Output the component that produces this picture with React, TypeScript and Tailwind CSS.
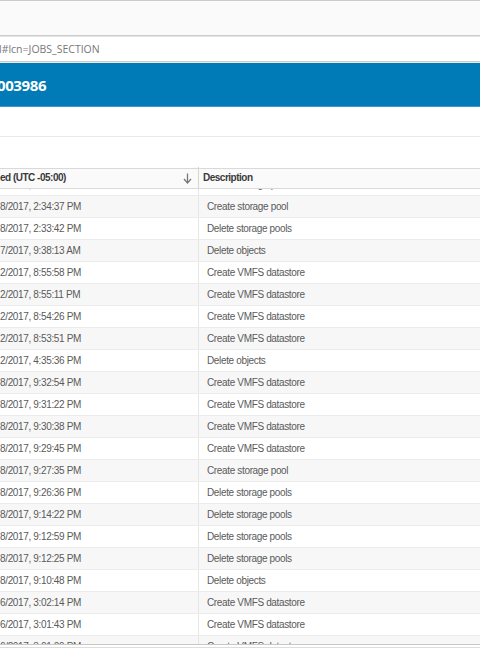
import React from "react";

const rows: [string, string][] = [
  ["8/2017, 2:34:37 PM", "Create storage pool"],
  ["8/2017, 2:33:42 PM", "Delete storage pools"],
  ["7/2017, 9:38:13 AM", "Delete objects"],
  ["2/2017, 8:55:58 PM", "Create VMFS datastore"],
  ["2/2017, 8:55:11 PM", "Create VMFS datastore"],
  ["2/2017, 8:54:26 PM", "Create VMFS datastore"],
  ["2/2017, 8:53:51 PM", "Create VMFS datastore"],
  ["2/2017, 4:35:36 PM", "Delete objects"],
  ["8/2017, 9:32:54 PM", "Create VMFS datastore"],
  ["8/2017, 9:31:22 PM", "Create VMFS datastore"],
  ["8/2017, 9:30:38 PM", "Create VMFS datastore"],
  ["8/2017, 9:29:45 PM", "Create VMFS datastore"],
  ["8/2017, 9:27:35 PM", "Create storage pool"],
  ["8/2017, 9:26:36 PM", "Delete storage pools"],
  ["8/2017, 9:14:22 PM", "Delete storage pools"],
  ["8/2017, 9:12:59 PM", "Delete storage pools"],
  ["8/2017, 9:12:25 PM", "Delete storage pools"],
  ["8/2017, 9:10:48 PM", "Delete objects"],
  ["6/2017, 3:02:14 PM", "Create VMFS datastore"],
  ["6/2017, 3:01:43 PM", "Create VMFS datastore"],
  ["6/2017, 3:01:09 PM", "Create VMFS datastore"],
];

function Row({ a, b, gray }: { a: string; b: string; gray: boolean }) {
  return (
    <div
      className={`flex h-[22px] items-center border-b border-[#ececec] ${
        gray ? "bg-[#f7f7f7]" : "bg-white"
      }`}
    >
      <div className="w-[198px] shrink-0 pl-0 whitespace-nowrap">{a}</div>
      <div className="h-full w-px bg-[#e6e6e6]" />
      <div className="pl-[8px] whitespace-nowrap">{b}</div>
    </div>
  );
}

export default function App() {
  return (
    <div className="w-[480px] h-[650px] overflow-hidden bg-white">
      <div className="h-[36px] bg-[#fafafa] border-t border-b border-[#cccccc]" />
      <div
        className="h-[26px] bg-white border-t border-[#e4e4e4] border-b border-b-[#cdcdcd] flex items-center pt-[2px] text-[10.5px] text-[#777777]"
        style={{ fontFamily: '"Open Sans", "Noto Sans", sans-serif' }}
      >
        <span className="-ml-[1px]">l#lcn=JOBS_SECTION</span>
      </div>
      <div className="h-px bg-[#e8e8e8]" />
      <div
        className="h-[44px] bg-[#007bb7] border-b border-[#3a9ad0] flex items-center pt-[2px] text-white font-bold text-[15px] tracking-[-0.4px]"
        style={{ fontFamily: '"Open Sans", "Noto Sans", sans-serif' }}
      >
        <span className="-ml-[3px]">003986</span>
      </div>
      <div className="h-[30px] border-b border-[#e9e9e9]" />
      <div className="h-[31px]" />
      <div
        className="text-[#5a5a5a] text-[10px] tracking-[-0.35px]"
        style={{ fontFamily: '"Liberation Sans", Arial, sans-serif' }}
      >
        <div className="h-[21px] flex items-center bg-[#fafafa] border-t border-b border-[#d9d9d9] font-bold text-[#3a3a3a] tracking-[-0.5px] pb-[2px]">
          <div className="w-[198px] shrink-0 flex items-center justify-between pr-[5px]">
            <span>ed (UTC -05:00)</span>
            <svg width="9" height="11" viewBox="0 0 9 11" className="mr-[1px] mt-[2px]">
              <path d="M4.5 0.5 V9.5" stroke="#777" strokeWidth="1.3" fill="none" />
              <path d="M1 6 L4.5 10 L8 6" stroke="#777" strokeWidth="1.3" fill="none" />
            </svg>
          </div>
          <div className="h-[21px] w-px bg-[#d6d6d6]" />
          <div className="pl-[4px]">Description</div>
        </div>
        <div className="h-[456px] overflow-hidden border-b border-[#c8c8c8]">
          <div className="-mt-[15px]">
            <Row a="8/2017, 2:35:10 PM" b="Create storage pool" gray={false} />
            {rows.map((r, i) => (
              <Row key={i} a={r[0]} b={r[1]} gray={i % 2 === 0} />
            ))}
          </div>
        </div>
        <div className="h-[3px] border-b border-[#dddddd]" />
      </div>
    </div>
  );
}
